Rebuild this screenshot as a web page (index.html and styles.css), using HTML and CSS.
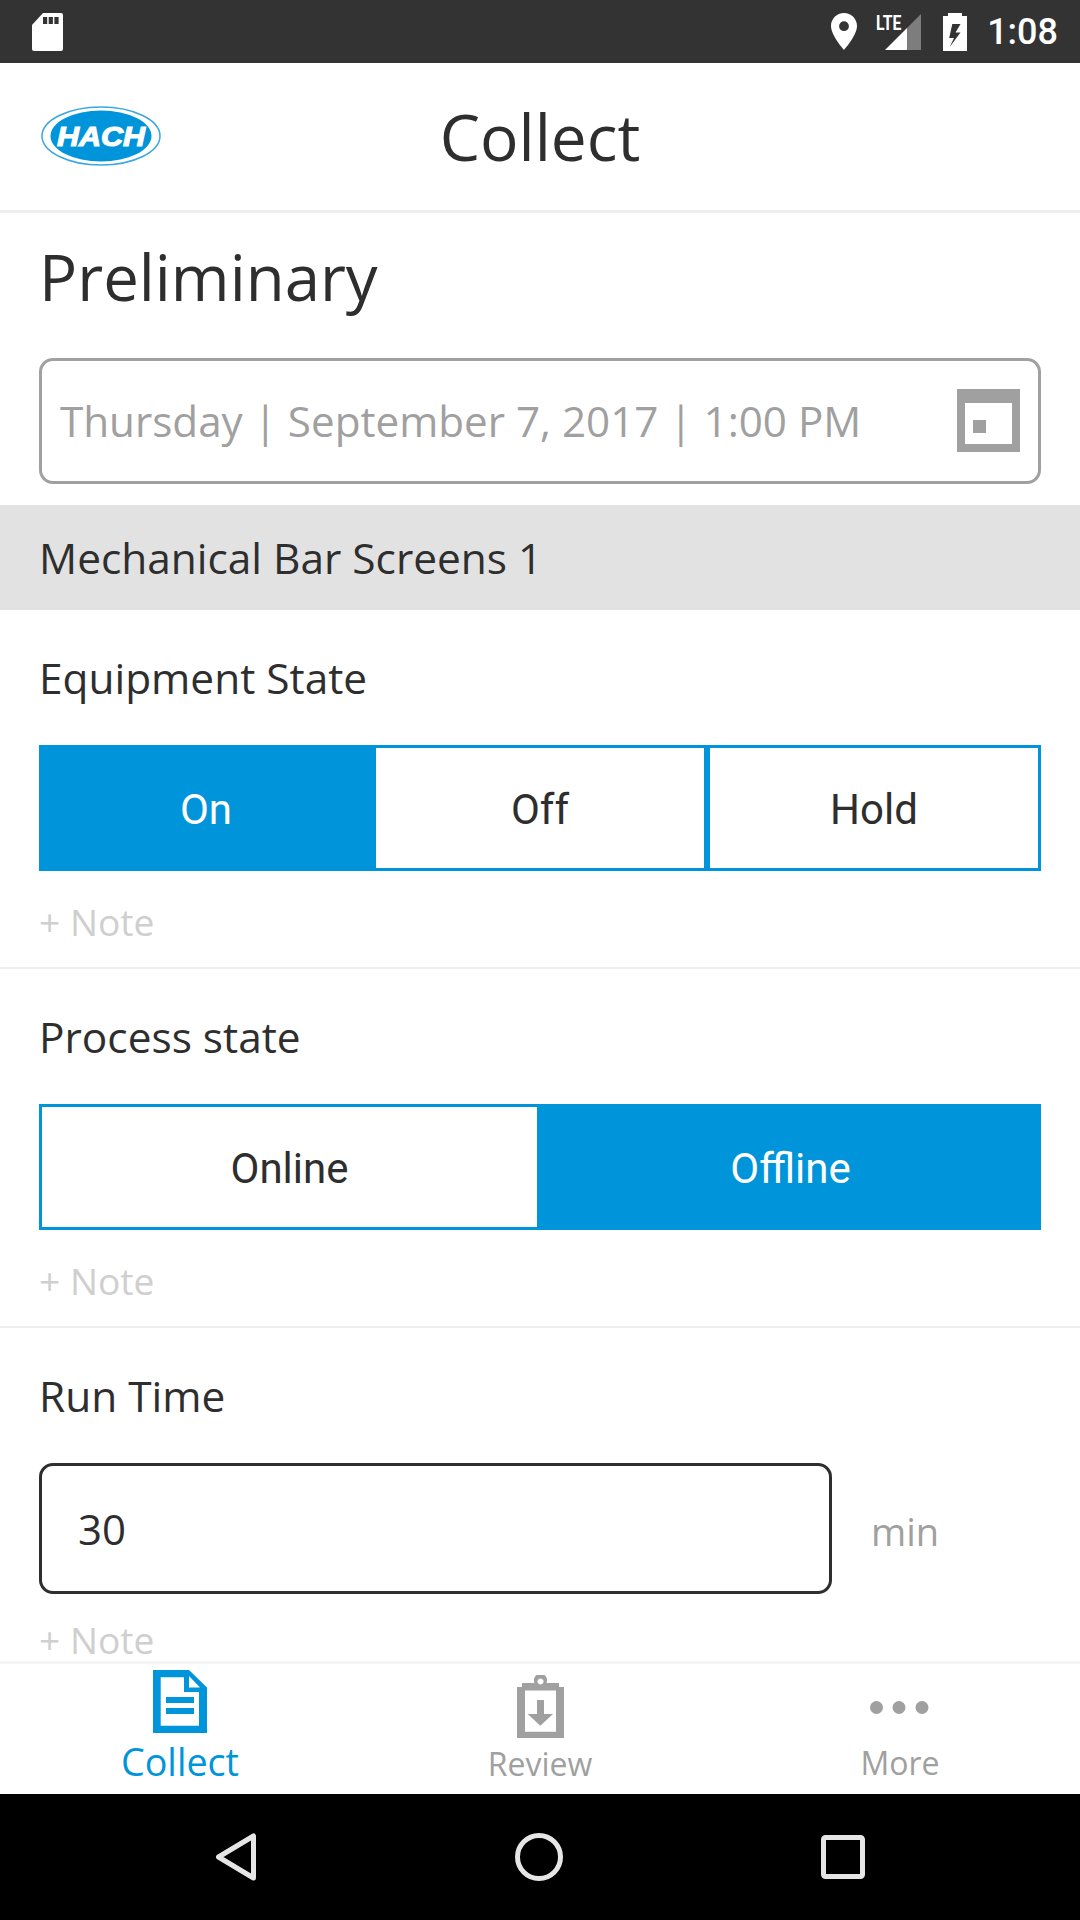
FILE: index.html
```html
<!DOCTYPE html>
<html lang="en">
<head>
<meta charset="utf-8">
<title>Collect</title>
<link rel="stylesheet" href="styles.css">
</head>
<body>
<div class="screen">
  <div class="statusbar">
    <svg class="ic-sd" width="31" height="38" viewBox="0 0 31 38"><path fill="#fff" d="M11 0H29a2 2 0 0 1 2 2V36a2 2 0 0 1-2 2H2a2 2 0 0 1-2-2V12Z"/><path fill="#333" d="M11 4h4.200v7H11zM16.700 4h4.200v7h-4.200zM22.400 4h4.200v7h-4.200z"/></svg>
    <div class="status-right">
      <svg class="ic-pin" width="26" height="37" viewBox="0 0 26 37"><path fill="#fff" fill-rule="evenodd" d="M13 0C5.800 0 0 5.800 0 13c0 9.500 13 24 13 24s13-14.500 13-24C26 5.800 20.200 0 13 0Zm0 8.300a4.900 4.900 0 1 1 0 9.800 4.900 4.900 0 0 1 0-9.800Z"/></svg>
      <div class="signal">
        <svg width="36" height="36" viewBox="0 0 36 36"><path fill="#fff" d="M0 36 22 14V36Z"/><path fill="#7d7d7d" d="M22 14 36 0V36H22Z"/></svg>
        <span class="lte">LTE</span>
      </div>
      <svg class="ic-batt" width="24" height="38" viewBox="0 0 24 38"><path fill="#fff" fill-rule="evenodd" d="M5 3V0H19V3H24V38H0V3ZM9.300 11 6.200 25H11L6.700 34 17.500 19.500H12.500L17.500 11Z"/></svg>
      <span class="clock">1:08</span>
    </div>
  </div>

  <header class="appbar">
    <svg class="logo" width="120" height="60" viewBox="0 0 120 60">
      <ellipse cx="60" cy="30" rx="59" ry="29" fill="#fff" stroke="#3aa7df" stroke-width="1.500"/>
      <ellipse cx="60" cy="30" rx="50.500" ry="25.500" fill="#0095da"/>
      <text class="logo-text" x="60" y="39.500" text-anchor="middle" textLength="88" lengthAdjust="spacingAndGlyphs">HACH</text>
    </svg>
    <h1 class="appbar-title">Collect</h1>
  </header>

  <main class="content">
    <h2 class="page-title">Preliminary</h2>
    <div class="datefield">
      <span class="datefield-text">Thursday | September 7, 2017 | 1:00 PM</span>
      <svg class="ic-cal" width="63" height="63" viewBox="0 0 63 63"><path fill="#a0a0a0" fill-rule="evenodd" d="M0 0H63V63H0ZM8 14V55H55V14Z"/><rect x="16" y="31" width="13" height="13" fill="#a0a0a0"/></svg>
    </div>
    <div class="section-bar">Mechanical Bar Screens 1</div>

    <section class="field">
      <div class="field-label">Equipment State</div>
      <div class="segments">
        <div class="segment is-on">On</div>
        <div class="segment">Off</div>
        <div class="segment">Hold</div>
      </div>
      <div class="note">+ Note</div>
    </section>

    <section class="field">
      <div class="field-label">Process state</div>
      <div class="segments">
        <div class="segment">Online</div>
        <div class="segment is-on">Offline</div>
      </div>
      <div class="note">+ Note</div>
    </section>

    <section class="field field-last">
      <div class="field-label">Run Time</div>
      <div class="input-row">
        <div class="input">30</div>
        <span class="unit">min</span>
      </div>
      <div class="note">+ Note</div>
    </section>
  </main>

  <nav class="tabbar">
    <div class="tab is-active">
      <svg class="tab-icon icon-collect" width="54" height="63" viewBox="0 0 54 63"><path fill="#0095da" fill-rule="evenodd" d="M0 0H36L54 17.500V63H0ZM7.700 7.300V55.700H46V22H31V7.300ZM36 6V17.500H47Z"/><rect x="13" y="27" width="28" height="6" fill="#0095da"/><rect x="13" y="38" width="28" height="6" fill="#0095da"/></svg>
      <span class="tab-label">Collect</span>
    </div>
    <div class="tab">
      <svg class="tab-icon icon-review" width="47" height="63" viewBox="0 0 47 63"><path fill="#a0a0a0" fill-rule="evenodd" d="M5 8H17.500A6.600 6.600 0 1 1 29.500 8H42V12H47V63H0V12H5ZM23.500 3.500a3 3 0 1 0 .01 0ZM8 15.600V56.700H39V15.600Z"/><path fill="#a0a0a0" d="M20 25h7V39h9L23.300 50.700 10.700 39H20Z"/></svg>
      <span class="tab-label">Review</span>
    </div>
    <div class="tab">
      <svg class="tab-icon icon-more" width="60" height="13" viewBox="0 0 60 13"><circle cx="6.500" cy="6.500" r="6.500" fill="#a0a0a0"/><circle cx="29" cy="6.500" r="6.500" fill="#a0a0a0"/><circle cx="52" cy="6.500" r="6.500" fill="#a0a0a0"/></svg>
      <span class="tab-label">More</span>
    </div>
  </nav>

  <div class="navbar">
    <svg width="42" height="48" viewBox="0 0 42 48"><path fill="none" stroke="#e6e6e6" stroke-width="5" stroke-linejoin="round" d="M38.500 3V45L3.500 24Z"/></svg>
    <svg width="48" height="48" viewBox="0 0 48 48"><circle cx="24" cy="24" r="21.500" fill="none" stroke="#e6e6e6" stroke-width="5"/></svg>
    <svg width="44" height="44" viewBox="0 0 44 44"><rect x="2.500" y="2.500" width="39" height="39" rx="2" fill="none" stroke="#e6e6e6" stroke-width="5"/></svg>
  </div>
</div>
</body>
</html>
```

FILE: styles.css
```css
* { box-sizing: border-box; }
html, body { margin: 0; padding: 0; background: #fff; }
body { font-family: "Open Sans", "Noto Sans", sans-serif; color: #2e2e2e; }
h1, h2 { margin: 0; font-weight: 400; }

.screen { width: 1080px; height: 1920px; display: flex; flex-direction: column; overflow: hidden; background: #fff; }

/* status bar */
.statusbar { flex: 0 0 63px; background: #333; display: flex; align-items: center; justify-content: space-between; padding: 0 22px 0 32px; }
.status-right { display: flex; align-items: center; }
.ic-pin { margin-right: 28px; }
.signal { position: relative; width: 36px; height: 36px; margin-right: 22px; }
.signal svg { display: block; }
.lte { position: absolute; left: -9px; top: 0; font: 700 21px/18px "Liberation Sans Narrow", Roboto, sans-serif; color: #fff; transform: scaleX(.75); transform-origin: left top; }
.ic-batt { margin-right: 20px; }
.clock { font: 500 36px/44px Roboto, sans-serif; color: #fff; }

/* app bar */
.appbar { flex: 0 0 150px; position: relative; display: flex; align-items: center; justify-content: center; border-bottom: 3px solid #eee; }
.logo { position: absolute; left: 41px; top: 43px; }
.logo-text { font: italic 700 28px "Liberation Sans", sans-serif; fill: #fff; stroke: #fff; stroke-width: 1.2px; }
.appbar-title { font-size: 64px; line-height: 80px; color: #2e2e2e; }

/* content */
.content { flex: 1 1 auto; min-height: 0; display: flex; flex-direction: column; }
.page-title { flex: none; font-size: 63.5px; line-height: 88px; padding: 20px 39px 0; }
.datefield { flex: none; margin: 37px 39px 0; height: 126px; border: 3px solid #a0a0a0; border-radius: 14px; display: flex; align-items: center; justify-content: space-between; padding: 0 18px 2px; }
.datefield-text { font-size: 42.2px; color: #a0a0a0; }
.section-bar { margin-top: 21px; height: 105px; flex: none; background: #e2e2e2; display: flex; align-items: center; padding: 0 39px; font-size: 42.4px; }

.field { flex: none; padding: 0 39px; height: 359px; border-bottom: 2px solid #eee; }
.field-last { border-bottom: 0; height: 330px; }
.field-label { font-size: 42.4px; line-height: 56px; padding-top: 40px; height: 135px; }
.segments { display: flex; height: 126px; }
.segment { flex: 1 1 0; display: flex; align-items: center; justify-content: center; border: 3px solid #0095da; padding-top: 2px; font: 400 42px Roboto, sans-serif; color: #2e2e2e; }
.segment.is-on { background: #0095da; color: #fff; }
.note { font-size: 37.2px; line-height: 50px; color: #cfcfcf; margin-top: 26px; }
.field-last .note { margin-top: 26px; line-height: 40px; }

.input-row { display: flex; align-items: center; gap: 39px; }
.input { flex: 0 0 793px; height: 131px; border: 3px solid #2e2e2e; border-radius: 14px; display: flex; align-items: center; padding: 0 36px; font-size: 42px; }
.unit { font-size: 38px; color: #a0a0a0; padding-top: 4px; }

/* tab bar */
.tabbar { flex: 0 0 133px; position: relative; display: flex; border-top: 3px solid #f4f4f4; background: #fff; }
.tab { flex: 1 1 0; display: flex; flex-direction: column; align-items: center; font-size: 32px; line-height: 46px; color: #a0a0a0; }
.tab-icon { display: block; height: 63px; }
.icon-collect { margin-top: 6px; margin-bottom: 6px; }
.icon-review { margin-top: 11px; margin-bottom: 3px; }
.icon-more { margin-top: 37px; margin-bottom: 26px; height: 13px; }
.tab.is-active { color: #0095da; font-size: 37.7px; }

/* android nav */
.navbar { flex: 0 0 126px; background: #000; display: flex; align-items: center; justify-content: center; gap: 258px; }
```
